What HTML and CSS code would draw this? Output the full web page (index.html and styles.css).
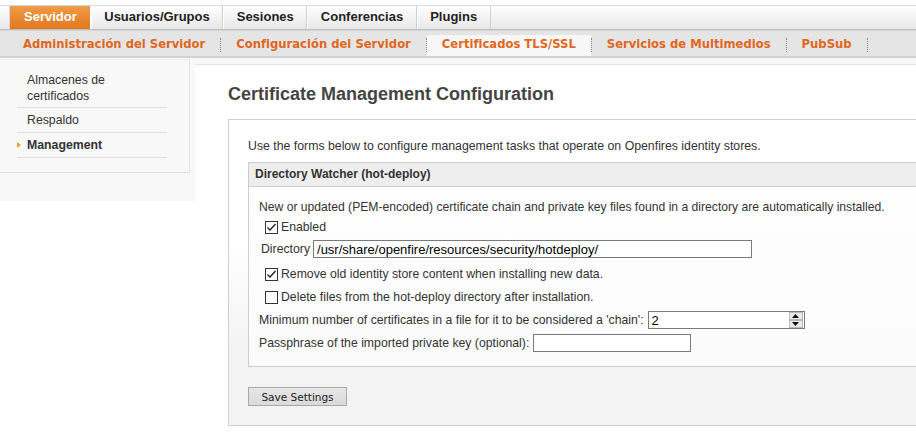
FILE: index.html
```html
<!DOCTYPE html>
<html lang="es">
<head>
<meta charset="utf-8">
<title>Certificate Management Configuration</title>
<link rel="stylesheet" href="styles.css">
</head>
<body>
<div class="topbar">
  <ul class="tabs">
    <li class="tab active">Servidor</li>
    <li class="tab">Usuarios/Grupos</li>
    <li class="tab">Sesiones</li>
    <li class="tab">Conferencias</li>
    <li class="tab">Plugins</li>
  </ul>
</div>
<div class="subnav">
  <a class="sub">Administración del Servidor</a><span class="sep"></span>
  <a class="sub">Configuración del Servidor</a><span class="sep"></span>
  <a class="sub current">Certificados TLS/SSL</a><span class="sep"></span>
  <a class="sub">Servicios de Multimedios</a><span class="sep"></span>
  <a class="sub">PubSub</a><span class="sep"></span>
</div>
<div class="layout">
  <aside class="side-wrap">
    <div class="side">
      <ul class="side-list">
        <li class="side-item first">Almacenes de<br>certificados</li>
        <li class="side-item">Respaldo</li>
        <li class="side-item selected"><span class="arrow"></span>Management</li>
      </ul>
    </div>
  </aside>
  <main class="main">
    <h1 class="title">Certificate Management Configuration</h1>
    <div class="box">
      <p class="intro">Use the forms below to configure management tasks that operate on Openfires identity stores.</p>
      <div class="panel">
        <div class="panel-head">Directory Watcher (hot-deploy)</div>
        <div class="panel-body">
          <div class="row r1">New or updated (PEM-encoded) certificate chain and private key files found in a directory are automatically installed.</div>
          <div class="row r2 cb-row">
            <svg class="cb" width="13" height="13" viewBox="0 0 13 13"><rect x="0.5" y="0.5" width="12" height="12" fill="#fff" stroke="#333"/><path d="M2.5 6.5 L5 9 L10.5 3" fill="none" stroke="#222" stroke-width="1.4"/></svg>
            <span>Enabled</span>
          </div>
          <div class="row r3 dir-row">
            <span class="dir-label">Directory</span>
            <input class="field dir-input" type="text" value="/usr/share/openfire/resources/security/hotdeploy/">
          </div>
          <div class="row r4 cb-row">
            <svg class="cb" width="13" height="13" viewBox="0 0 13 13"><rect x="0.5" y="0.5" width="12" height="12" fill="#fff" stroke="#333"/><path d="M2.5 6.5 L5 9 L10.5 3" fill="none" stroke="#222" stroke-width="1.4"/></svg>
            <span>Remove old identity store content when installing new data.</span>
          </div>
          <div class="row r5 cb-row">
            <svg class="cb" width="13" height="13" viewBox="0 0 13 13"><rect x="0.5" y="0.5" width="12" height="12" fill="#fff" stroke="#333"/></svg>
            <span>Delete files from the hot-deploy directory after installation.</span>
          </div>
          <div class="row r6">
            <span>Minimum number of certificates in a file for it to be considered a 'chain':</span>
            <span class="spinner">
              <input class="spin-input" type="text" value="2">
              <span class="spin-btns">
                <span class="spin-btn"><svg width="7" height="4" viewBox="0 0 7 4"><path d="M0 4 L3.5 0 L7 4 Z" fill="#111"/></svg></span>
                <span class="spin-btn"><svg width="7" height="4" viewBox="0 0 7 4"><path d="M0 0 L3.5 4 L7 0 Z" fill="#111"/></svg></span>
              </span>
            </span>
          </div>
          <div class="row r7">
            <span>Passphrase of the imported private key (optional):</span>
            <input class="field pass-input" type="password" value="">
          </div>
        </div>
      </div>
      <button class="save" type="button">Save Settings</button>
    </div>
  </main>
</div>
</body>
</html>
```

FILE: styles.css
```css
* { box-sizing: border-box; }
html, body { margin: 0; padding: 0; background: #fff; }
body {
  font-family: "Liberation Sans", Arial, sans-serif;
  font-size: 12px;
  color: #333;
  width: 916px;
  height: 435px;
  overflow: hidden;
}

/* top tabs */
.topbar {
  margin-top: 5px;
  height: 25px;
  border-top: 1px solid #d9d9d9;
  border-bottom: 1px solid #bdbdbd;
  background: linear-gradient(#ffffff, #e8e8e8);
}
.tabs {
  list-style: none;
  margin: 0 0 0 9px;
  padding: 0;
  display: flex;
  height: 23px;
  border-left: 1px solid #d8d8d8;
}
.tab {
  padding: 0 12.5px 0 13.5px;
  font-weight: bold;
  font-size: 13px;
  line-height: 22px;
  color: #222;
  border-right: 1px solid #d0d0d0;
  box-shadow: inset 1px 0 #fff;
}
.tab.active {
  padding: 0 13px 0 14px;
  color: #fff;
  background: linear-gradient(#ef9a48, #e2781e);
  border-right-color: #fff;
  box-shadow: none;
}

/* sub navigation */
.subnav {
  height: 28px;
  display: flex;
  align-items: flex-end;
  padding-left: 8px;
  background: #e5e5e5;
  border-top: 1px solid #d6d6d6;
  border-bottom: 2px solid #d2d2d2;
}
.sub {
  font-family: "DejaVu Sans", Verdana, sans-serif;
  font-weight: bold;
  font-size: 11.6px;
  color: #e2671e;
  padding: 0 15px;
  height: 21px;
  line-height: 19px;
}
.sub.current { background: #f7f7f7; }
.sep {
  width: 0;
  height: 14px;
  border-left: 1px dotted #8a8a8a;
  margin-bottom: 4px;
}

/* layout */
.layout { display: flex; align-items: flex-start; }
.side-wrap {
  width: 195px;
  flex: none;
  background: #f8f8f8;
  padding-bottom: 28px;
}
.side {
  width: 190px;
  border-right: 1px solid #e2e2e2;
  border-bottom: 1px solid #e2e2e2;
  border-top: 1px solid #ececec;
  margin-top: 1px;
  padding: 8px 0 14px 17px;
}
.side-list { list-style: none; margin: 0; padding: 0; width: 150px; }
.side-item {
  position: relative;
  padding: 4px 0 4px 10px;
  line-height: 16px;
  font-size: 12.3px;
  color: #333;
  border-bottom: 1px solid #e0e0e0;
}
.side-item.first { padding-bottom: 3px; }
.side-item.selected { font-weight: bold; }
.arrow {
  position: absolute;
  left: 0;
  top: 9px;
  width: 0;
  height: 0;
  border-top: 3px solid transparent;
  border-bottom: 3px solid transparent;
  border-left: 4px solid #e5a12f;
}

.main {
  flex: 1;
  min-width: 0;
  overflow: hidden;
  padding: 6px 0 0 33px;
  background: linear-gradient(#f8f8f8 0 6px, #e3e3e3 6px 7px, #fff 7px);
  height: 377px;
}
.title {
  margin: 19px 0 0 0;
  font-size: 18px;
  line-height: 22px;
  font-weight: bold;
  color: #444;
}
.box {
  margin-top: 14px;
  width: 740px;
  border: 1px solid #cfcfcf;
  padding: 19px 0 19px 19px;
  background: linear-gradient(#ffffff 40%, #f3f3f3 75%, #f3f3f3);
}
.intro {
  margin: 0 0 8px 0;
  line-height: 15px;
  font-size: 12.3px;
}
.panel {
  border: 1px solid #cdcdcd;
  background: linear-gradient(#ffffff, #fbfbfb);
}
.panel-head {
  height: 24px;
  line-height: 22px;
  padding-left: 6px;
  background: #eeeeee;
  border-bottom: 1px solid #cdcdcd;
  font-weight: bold;
  font-size: 12px;
  color: #333;
}
.panel-body { padding: 10px 0 13px 10px; }
.row {
  display: flex;
  align-items: center;
  font-size: 12.25px;
  white-space: nowrap;
}
.r1 { height: 20px; font-size: 12.15px; }
.r2 { height: 20px; }
.r3 { height: 24px; }
.r4 { height: 26px; }
.r5 { height: 20px; }
.r6 { height: 26px; }
.r7 { height: 20px; }
.cb-row { padding-left: 6px; }
.cb { flex: none; margin-right: 3px; }
.dir-row { padding-left: 2px; }
.dir-label { margin-right: 3px; }
.field {
  font-family: "Liberation Sans", Arial, sans-serif;
  font-size: 13px;
  color: #000;
  border: 1px solid #7a7a7a;
  background: #fff;
  padding: 0 3px;
  margin: 0;
  outline: none;
}
.dir-input { width: 439px; height: 18px; }
.pass-input { width: 158px; height: 18px; margin-left: 4px; }
.spinner {
  display: flex;
  width: 157px;
  height: 18px;
  margin-left: 4px;
  border: 1px solid #7a7a7a;
  background: #fff;
}
.spin-input {
  flex: 1;
  min-width: 0;
  border: 0;
  padding: 0 3px;
  margin: 0;
  font-family: "Liberation Sans", Arial, sans-serif;
  font-size: 13px;
  color: #000;
  background: transparent;
  outline: none;
}
.spin-btns {
  display: flex;
  flex-direction: column;
  width: 14px;
  margin-right: 1px;
}
.spin-btn {
  flex: 1;
  display: flex;
  align-items: center;
  justify-content: center;
  background: #ececec;
  border: 1px solid #b8b8b8;
}
.save {
  margin-top: 20px;
  width: 99px;
  height: 19px;
  padding: 0;
  font-family: "DejaVu Sans", Tahoma, sans-serif;
  font-size: 10.5px;
  color: #222;
  background: linear-gradient(#e6e6e6, #dadada);
  border: 1px solid #a8a8a8;
  display: block;
}
```
